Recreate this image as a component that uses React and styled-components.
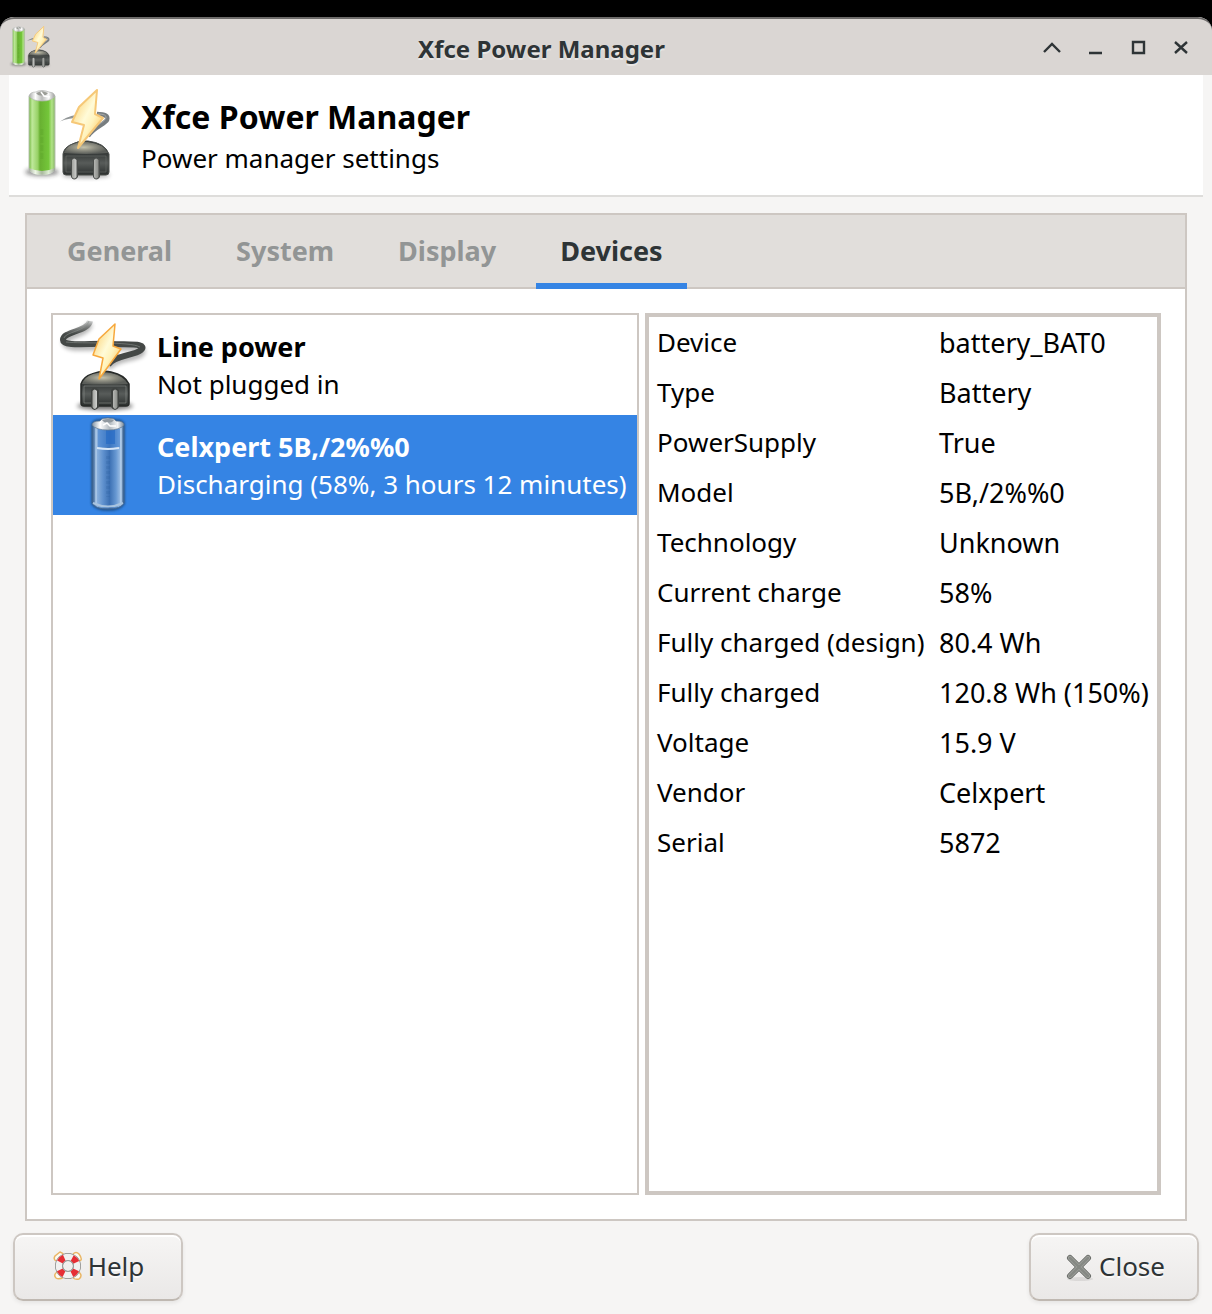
import React, { useState } from "react";
import styled, { createGlobalStyle } from "styled-components";

const GlobalStyle = createGlobalStyle`
  *, *::before, *::after { box-sizing: border-box; }
  body { margin: 0; background: #000; }
  button { font: inherit; color: inherit; margin: 0; }
`;

const Desktop = styled.div`
  min-height: 100vh;
  padding-top: 17px;
  display: flex;
  flex-direction: column;
  background: #000;
  font-family: "Noto Sans", sans-serif;
  font-size: 26px;
  line-height: 38px;
  color: #000;
`;

const Window = styled.div`
  flex: 1;
  display: flex;
  flex-direction: column;
  background: #f6f5f4;
  border-radius: 14px 14px 0 0;
  overflow: hidden;
`;

const TitleBar = styled.header`
  display: flex;
  align-items: center;
  height: 58px;
  padding: 0 10px 0 9px;
  border-top: 2px solid #6d6b6a;
  border-radius: 14px 14px 0 0;
  background: #dad6d3;
`;

const WindowTitle = styled.div`
  flex: 1;
  text-align: center;
  font-size: 24px;
  line-height: 32px;
  padding-top: 4px;
  font-weight: 700;
  color: #2e3436;
  text-shadow: 0 2px #e9e7e5;
`;

const WindowControls = styled.div`
  display: flex;
  padding-top: 2px;
`;

const ControlButton = styled.button`
  display: grid;
  place-items: center;
  width: 43px;
  height: 43px;
  padding: 0;
  border: 0;
  background: none;

  svg { display: block; }
`;

const Banner = styled.section`
  display: flex;
  align-items: center;
  gap: 24px;
  margin: 0 9px;
  padding: 12px;
  background: #fff;
  border-bottom: 2px solid #dedddb;
`;

const BannerHeading = styled.div`
  padding-top: 4px;
`;

const BannerTitle = styled.h1`
  margin: 0;
  font-size: 32px;
  line-height: 42px;
  font-weight: 700;
`;

const BannerText = styled.p`
  margin: 0;
  line-height: 40px;
`;

const Notebook = styled.main`
  flex: 1;
  display: flex;
  flex-direction: column;
  margin: 16px 25px 12px;
  border: 2px solid #cdc7c2;
  background: #fff;
`;

const TabStrip = styled.div`
  display: flex;
  gap: 16px;
  height: 74px;
  padding: 0 16px;
  background: #e1dedb;
  box-shadow: inset 0 -2px #cdc7c2;
`;

const Tab = styled.button`
  padding: 0 24px 2px;
  border: 0;
  background: none;
  font-size: 27px;
  font-weight: 700;
  color: ${(p) => (p.$active ? "#2e3436" : "#929595")};
  box-shadow: ${(p) => (p.$active ? "inset 0 -6px #3584e4" : "none")};
`;

const Page = styled.div`
  flex: 1;
  display: flex;
  gap: 6px;
  padding: 24px;
`;

const DeviceList = styled.div`
  flex: 584 1 0;
  display: flex;
  flex-direction: column;
  border: 2px solid #cdc7c2;
`;

const DeviceRow = styled.button`
  display: flex;
  align-items: center;
  gap: 4px;
  height: 100px;
  padding: 0 4px;
  border: 0;
  text-align: left;
  white-space: nowrap;
  background: ${(p) => (p.$selected ? "#3584e4" : "#fff")};
  color: ${(p) => (p.$selected ? "#fff" : "#000")};

  svg { flex: none; }
`;

const DeviceName = styled.strong`
  display: block;
  font-size: 27px;
`;

const DeviceStatus = styled.span`
  display: block;
  line-height: 36px;
`;

const Details = styled.div`
  flex: 508 1 0;
  border: 4px solid #cdc7c2;
`;

const DetailTable = styled.table`
  width: 100%;
  table-layout: fixed;
  border-collapse: collapse;
`;

const DetailLabel = styled.th`
  width: 282px;
  height: 50px;
  padding: 0 0 0 8px;
  text-align: left;
  font-weight: 400;
  white-space: nowrap;
`;

const DetailValue = styled.td`
  height: 50px;
  padding: 2px 0 0 8px;
  font-size: 27px;
  white-space: nowrap;
`;

const ActionBar = styled.footer`
  display: flex;
  justify-content: space-between;
  padding: 0 13px 13px;
`;

const ActionButton = styled.button`
  display: flex;
  align-items: center;
  justify-content: center;
  gap: 4px;
  width: 170px;
  height: 68px;
  padding: 0 0 2px;
  border: 2px solid #cdc7c2;
  border-bottom-color: #bfb8b1;
  border-radius: 10px;
  background: linear-gradient(#f6f5f4, #eae8e7);
  box-shadow: inset 0 2px #fff, 0 2px 4px rgba(0, 0, 0, 0.07);
  color: #2e3436;
  text-shadow: 0 2px rgba(255, 255, 255, 0.8);
`;

function PlugGradients({ id }) {
  return (
    <>
      <linearGradient id={id + "bolt"} x1="0" y1="0" x2="1" y2="1">
        <stop offset=".1" stopColor="#fbd070" />
        <stop offset=".45" stopColor="#fffbd8" />
        <stop offset=".6" stopColor="#fff3bd" />
        <stop offset=".9" stopColor="#fbbf50" />
      </linearGradient>
      <linearGradient id={id + "body"} x1="0" y1="0" x2="0" y2="1">
        <stop offset=".3" stopColor="#2c302f" />
        <stop offset=".65" stopColor="#585c5a" />
        <stop offset="1" stopColor="#2a2e2d" />
      </linearGradient>
      <radialGradient id={id + "dome"} cx=".45" cy=".45" r=".55">
        <stop offset="0" stopColor="#c4c2ac" />
        <stop offset=".5" stopColor="#8c8c80" />
        <stop offset="1" stopColor="#5a5d59" />
      </radialGradient>
      <linearGradient id={id + "prong"}>
        <stop offset="0" stopColor="#a0a29e" />
        <stop offset=".35" stopColor="#fff" />
        <stop offset=".6" stopColor="#e8e9e6" />
        <stop offset="1" stopColor="#8b8d89" />
      </linearGradient>
      <filter id={id + "soft"} x="-30%" y="-60%" width="160%" height="220%">
        <feGaussianBlur stdDeviation="2" />
      </filter>
    </>
  );
}

function PowerManagerIcon({ size, id }) {
  const ref = (name) => `url(#${id}${name})`;
  return (
    <svg width={size} height={size} viewBox="0 0 96 96" aria-hidden="true">
      <defs>
        <PlugGradients id={id} />
        <linearGradient id={id + "green"}>
          <stop offset="0" stopColor="#6fb53c" />
          <stop offset=".12" stopColor="#bfe99b" />
          <stop offset=".34" stopColor="#97d166" />
          <stop offset=".42" stopColor="#68b031" />
          <stop offset=".75" stopColor="#74c63a" />
          <stop offset=".88" stopColor="#b2e388" />
          <stop offset="1" stopColor="#84b562" />
        </linearGradient>
        <linearGradient id={id + "cap"}>
          <stop offset="0" stopColor="#a8aaa8" />
          <stop offset=".25" stopColor="#fff" />
          <stop offset=".5" stopColor="#b9bab9" />
          <stop offset=".75" stopColor="#f8f8f8" />
          <stop offset="1" stopColor="#9a9c9a" />
        </linearGradient>
      </defs>
      <ellipse cx="21" cy="85" rx="17" ry="4" fill="#222" opacity=".5" filter={ref("soft")} />
      <path d="M8 9Q21 4 34 9V83Q30 88 21 88T8 83Z" fill={ref("green")} stroke="#b8c3b1" />
      <path d="M8 81Q21 87 34 81V84Q30 88 21 88T8 84Z" fill={ref("cap")} opacity=".8" />
      <path d="M8 9Q9 5 15 5L17 4Q21 3 25 4L28 5Q33 5 34 9Q31 14 21 14T8 9Z" fill={ref("cap")} stroke="#b5b6b4" strokeWidth=".7" />
      <path d="M15 6Q21 3 27 6L25 8Q21 9 17 8Z" fill="#9b9d97" />
      <path d="M20 5L23 9L29 10" stroke="#fff" strokeWidth="1.500" fill="none" />
      <path d="M21 42V72" stroke="#438b1e" strokeWidth="3" strokeDasharray="6 2" opacity=".14" />

      <path d="M39 34.500Q49 27 64 27L64 31Q50 30 39 34.500Z" fill="#6b7173" opacity=".75" />
      <path d="M76 27Q88 27 86 33C84 37 73 40 67 49" fill="none" stroke="#777d7f" strokeWidth="4.500" />
      <path d="M77 27Q86 27 85 31C83 36 72 39 67 47" fill="none" stroke="#a6aaab" strokeWidth="1" />
      <ellipse cx="65" cy="88" rx="24" ry="3" fill="#000" opacity=".35" filter={ref("soft")} />
      <path d="M42 67Q43 61 49 58Q58 53 67 54Q84 56 88 67V85Q88 88 85 88H45Q42 88 42 85Z" fill={ref("body")} stroke="#4a4e4b" />
      <path d="M43 66Q44 61 50 58Q58 54 67 55Q83 57 87 66Q65 68 43 66Z" fill={ref("dome")} />
      <path d="M45 69H85V85H45Z" fill="none" stroke="#717572" opacity=".5" />
      <path d="M50 72Q53 68 57 72V90Q53 95 50 90ZM72 72Q75 68 79 72V90Q75 95 72 90Z" fill="#4b4e4c" />
      <path d="M51 73Q53 70 55.500 73V90Q53 93 51 90ZM73 73Q75 70 77.500 73V90Q75 93 73 90Z" fill={ref("prong")} />
      <path d="M76 3L58 20L51 35L63 38L57 61L82 31L74 27Z" fill={ref("bolt")} stroke="#f6c877" strokeWidth="2" strokeLinejoin="round" />
    </svg>
  );
}

function LinePowerIcon() {
  return (
    <svg width="96" height="96" viewBox="0 0 96 96" aria-hidden="true">
      <defs>
        <PlugGradients id="line" />
        <linearGradient id="linecable" gradientUnits="userSpaceOnUse" x1="0" y1="2" x2="0" y2="17">
          <stop offset="0" stopColor="#555957" stopOpacity=".15" />
          <stop offset="1" stopColor="#444846" />
        </linearGradient>
      </defs>
      <path d="M33 7C30 18 7 18 8 26C9 34 38 29 57 30C72 31 91 30 84 37C77 42 58 41 51 51" fill="none" stroke="#000" strokeWidth="6" opacity=".3" filter="url(#linesoft)" />
      <path d="M33 4C31 15 6 14 6 23C6 30 34 26 54 27C72 28 91 26 84 33C77 39 57 38 51 48" fill="none" stroke="url(#linecable)" strokeWidth="6" />
      <path d="M32 4C30 14 8 15 7 21M9 25C25 27 72 24 83 30" fill="none" stroke="#898d8a" strokeWidth="1" opacity=".6" />
      <ellipse cx="48" cy="89" rx="28" ry="4" fill="#000" opacity=".55" filter="url(#linesoft)" />
      <path d="M24 67Q26 60 35 57Q45 53 54 55Q68 58 72 67V86Q72 89 69 89H27Q24 89 24 86Z" fill="url(#linebody)" stroke="#272a28" strokeWidth="1.500" />
      <path d="M25 67Q27 60 36 57Q45 54 54 56Q67 59 71 67Q48 68 25 67Z" fill="url(#linedome)" />
      <path d="M27 69H69V86H27Z" fill="none" stroke="#9a9d98" opacity=".5" />
      <path d="M34 73Q37 68 42 73V90Q37 96 34 90ZM54 73Q58 68 62 73V90Q58 96 54 90Z" fill="#3f4240" />
      <path d="M35.500 74Q37.500 71 40 74V90Q37.500 94 35.500 90ZM56 74Q58 71 60.500 74V90Q58 94 56 90Z" fill="url(#lineprong)" />
      <path d="M58 7L42 22L36 38L46 41L42 62L64 32L56 29Z" fill="url(#linebolt)" stroke="#f7a83c" strokeWidth="1.500" strokeLinejoin="round" />
    </svg>
  );
}

function BatteryIcon() {
  return (
    <svg width="96" height="96" viewBox="0 0 96 96" aria-hidden="true">
      <defs>
        <linearGradient id="cell">
          <stop offset="0" stopColor="#2f5685" />
          <stop offset=".14" stopColor="#8fb4df" />
          <stop offset=".35" stopColor="#5f91ce" />
          <stop offset=".55" stopColor="#3c70b3" />
          <stop offset=".75" stopColor="#6798d2" />
          <stop offset=".9" stopColor="#a0c0e5" />
          <stop offset="1" stopColor="#315681" />
        </linearGradient>
        <linearGradient id="cellcap">
          <stop offset="0" stopColor="#8193a5" />
          <stop offset=".25" stopColor="#fff" />
          <stop offset=".55" stopColor="#b1b9c0" />
          <stop offset=".8" stopColor="#f4f5f6" />
          <stop offset="1" stopColor="#76899d" />
        </linearGradient>
        <filter id="cellsoft" x="-20%" y="-20%" width="140%" height="140%">
          <feGaussianBlur stdDeviation="1" />
        </filter>
      </defs>
      <path d="M34 7Q36 2 43 2Q51 -1 59 2Q66 2 68 7V87Q64 94 51 94T34 87Z" fill="#183e6b" opacity=".65" filter="url(#cellsoft)" />
      <path d="M35 8Q51 12 67 8V86Q64 92 51 92T35 86Z" fill="url(#cell)" stroke="#416894" />
      <path d="M41 12V30H63V12" fill="#3d7dd0" opacity=".5" />
      <path d="M49 13H58V27H49Z" fill="#266bc4" opacity=".7" />
      <path d="M39 11V86M64 11V86" stroke="#c0d7ef" strokeWidth="1.500" opacity=".65" />
      <path d="M40 31Q51 33 62 31" fill="none" stroke="#d7e6f7" strokeWidth="2" />
      <path d="M51 39V80" stroke="#2c5f9e" strokeWidth="4" strokeDasharray="3 2" opacity=".2" />
      <path d="M36 86Q51 93 66 86" fill="none" stroke="#a9c4df" strokeWidth="2" />
      <path d="M35 8Q35 4 43 4L45 2Q51 0 57 2L59 4Q67 4 67 8Q63 13 51 13T35 8Z" fill="url(#cellcap)" stroke="#687d91" strokeWidth=".7" />
      <path d="M45 3Q51 1 57 3L55 5Q51 6 47 5Z" fill="#90989f" />
      <path d="M46 8L50 6L53 9L59 9" fill="none" stroke="#fff" strokeWidth="1.500" />
    </svg>
  );
}

function HelpIcon() {
  return (
    <svg width="32" height="32" viewBox="0 0 32 32" aria-hidden="true">
      <g fill="#fffaf0" stroke="#e9b665" strokeWidth="1.500">
        <path d="M4 11Q1 9 3 6L8 2Q11 3 12 5" />
        <path d="M21 4Q24 1 27 4Q30 8 29 10L26 12" />
        <path d="M5 22Q1 25 4 28Q7 30 12 27" />
        <path d="M27 22Q31 26 27 29Q24 30 21 28" />
      </g>
      <circle cx="16" cy="16" r="9" fill="none" stroke="#888a88" strokeWidth="8" />
      <circle cx="16" cy="16" r="9" fill="none" stroke="#f1f1f0" strokeWidth="6.500" />
      <circle cx="16" cy="16" r="9" fill="none" stroke="#e62f35" strokeWidth="6.500" strokeDasharray="6 8.137" strokeDashoffset="-4.069" />
      <circle cx="16" cy="16" r="5.500" fill="none" stroke="#9a9c9a" />
    </svg>
  );
}

function CloseIcon() {
  return (
    <svg width="32" height="32" viewBox="0 0 32 32" aria-hidden="true">
      <ellipse cx="17" cy="29" rx="13" ry="2" fill="#000" opacity=".08" />
      <g fill="none" strokeLinecap="round">
        <path d="M7 8L25 26M25 8L7 26" stroke="#5c5f5b" strokeWidth="6" />
        <path d="M7 8L25 26M25 8L7 26" stroke="#a4a6a1" strokeWidth="4.500" />
        <path d="M7 8L25 26M25 8L7 26" stroke="#868984" strokeWidth="2.800" />
      </g>
    </svg>
  );
}

const controls = [
  { label: "Roll up", d: "M5 17L13 9L21 17" },
  { label: "Minimize", d: "M7 18H20" },
  { label: "Maximize", d: "M8 7H19V18H8Z" },
  { label: "Close window", d: "M7 7L19 18M19 7L7 18" },
];

const tabs = ["General", "System", "Display", "Devices"];

const devices = [
  { name: "Line power", status: "Not plugged in", Icon: LinePowerIcon },
  { name: "Celxpert 5B,/2%%0", status: "Discharging (58%, 3 hours 12 minutes)", Icon: BatteryIcon },
];

const details = [
  ["Device", "battery_BAT0"],
  ["Type", "Battery"],
  ["PowerSupply", "True"],
  ["Model", "5B,/2%%0"],
  ["Technology", "Unknown"],
  ["Current charge", "58%"],
  ["Fully charged (design)", "80.4 Wh"],
  ["Fully charged", "120.8 Wh (150%)"],
  ["Voltage", "15.9 V"],
  ["Vendor", "Celxpert"],
  ["Serial", "5872"],
];

export default function App() {
  const [tab, setTab] = useState("Devices");
  const [selected, setSelected] = useState(1);

  return (
    <Desktop>
      <GlobalStyle />
      <Window>
        <TitleBar>
          <PowerManagerIcon size={44} id="small" />
          <WindowTitle>Xfce Power Manager</WindowTitle>
          <WindowControls>
            {controls.map((c) => (
              <ControlButton key={c.label} type="button" aria-label={c.label}>
                <svg width="26" height="26" viewBox="0 0 26 26" fill="none" stroke="#2e3436" strokeWidth="2.400">
                  <path d={c.d} />
                </svg>
              </ControlButton>
            ))}
          </WindowControls>
        </TitleBar>

        <Banner>
          <PowerManagerIcon size={96} id="large" />
          <BannerHeading>
            <BannerTitle>Xfce Power Manager</BannerTitle>
            <BannerText>Power manager settings</BannerText>
          </BannerHeading>
        </Banner>

        <Notebook>
          <TabStrip role="tablist">
            {tabs.map((name) => (
              <Tab
                key={name}
                type="button"
                role="tab"
                aria-selected={tab === name}
                $active={tab === name}
                onClick={() => setTab(name)}
              >
                {name}
              </Tab>
            ))}
          </TabStrip>
          <Page role="tabpanel" aria-label="Devices">
            <DeviceList>
              {devices.map(({ name, status, Icon }, i) => (
                <DeviceRow
                  key={name}
                  type="button"
                  aria-pressed={selected === i}
                  $selected={selected === i}
                  onClick={() => setSelected(i)}
                >
                  <Icon />
                  <span>
                    <DeviceName>{name}</DeviceName>
                    <DeviceStatus>{status}</DeviceStatus>
                  </span>
                </DeviceRow>
              ))}
            </DeviceList>
            <Details>
              <DetailTable>
                <tbody>
                  {details.map(([label, value]) => (
                    <tr key={label}>
                      <DetailLabel scope="row">{label}</DetailLabel>
                      <DetailValue>{value}</DetailValue>
                    </tr>
                  ))}
                </tbody>
              </DetailTable>
            </Details>
          </Page>
        </Notebook>

        <ActionBar>
          <ActionButton type="button">
            <HelpIcon />
            Help
          </ActionButton>
          <ActionButton type="button">
            <CloseIcon />
            Close
          </ActionButton>
        </ActionBar>
      </Window>
    </Desktop>
  );
}
